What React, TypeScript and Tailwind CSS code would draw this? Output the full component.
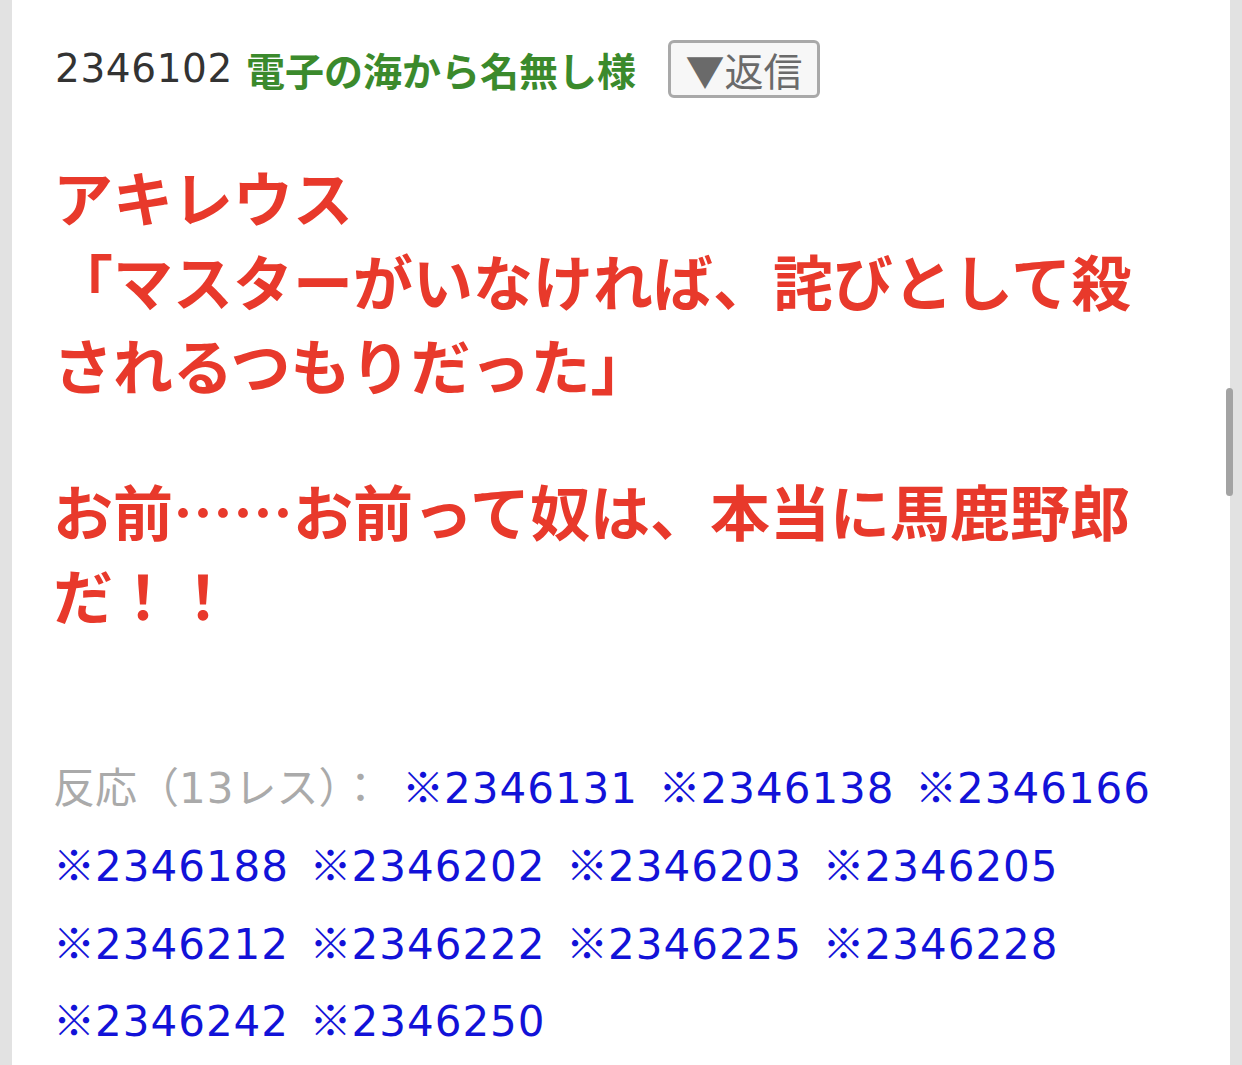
import React from "react";

const jp = "font-['Noto_Sans_CJK_JP','Noto_Sans_CJK_SC',sans-serif]";
const num = "font-['DejaVu_Sans','Noto_Sans_CJK_JP',sans-serif]";

const replies = [
  "2346131",
  "2346138",
  "2346166",
  "2346188",
  "2346202",
  "2346203",
  "2346205",
  "2346212",
  "2346222",
  "2346225",
  "2346228",
  "2346242",
  "2346250",
];

function Num({ children }: { children: React.ReactNode }) {
  return <span className={`${num} tracking-[1px]`}>{children}</span>;
}

export default function App() {
  return (
    <div className={`relative min-h-[1065px] bg-[#e2e2e2] px-[12px] ${jp}`}>
      <div className="min-h-[1065px] bg-white pl-[41px] pt-[40px]">
        {/* post header */}
        <div className="flex h-[58px] items-center">
          <span className={`ml-[2px] text-[39px] tracking-[0.6px] text-[#333333] ${num}`}>2346102</span>
          <span className="ml-[13px] text-[39px] font-bold text-[#3b8a2c]">
            電子の海から名無し様
          </span>
          <button className="ml-[32px] flex h-[58px] w-[152px] items-center justify-center rounded-[6px] border-[3px] border-[#a9a9a9] bg-[#f7f7f7] text-[39px] leading-none text-[#6a6a6a]">
            ▼返信
          </button>
        </div>

        {/* body */}
        <div className="mt-[56px] w-[1110px] text-[60px] font-bold leading-[84px] text-[#e8392b]">
          <p>
            アキレウス
            <br />
            「マスターがいなければ、詫びとして殺されるつもりだった」
          </p>
          <p className="mt-[62px]">お前……お前って奴は、本当に馬鹿野郎だ！！</p>
        </div>

        {/* replies */}
        <div className="mt-[110px] flex w-[1130px] flex-wrap text-[42px] leading-[78px]">
          <span className="h-[77.75px] w-[349px] text-[#aaaaaa]">
            反応（<Num>13</Num>レス）：
          </span>
          {replies.map((r) => (
            <a key={r} href="#" className="h-[77.75px] w-[256.5px] text-[#1212d8]">
              ※<Num>{r}</Num>
            </a>
          ))}
        </div>
      </div>

      {/* scrollbar thumb */}
      <div className="absolute right-[9px] top-[388px] h-[108px] w-[7px] rounded-full bg-[#a3a3a3]" />
    </div>
  );
}
